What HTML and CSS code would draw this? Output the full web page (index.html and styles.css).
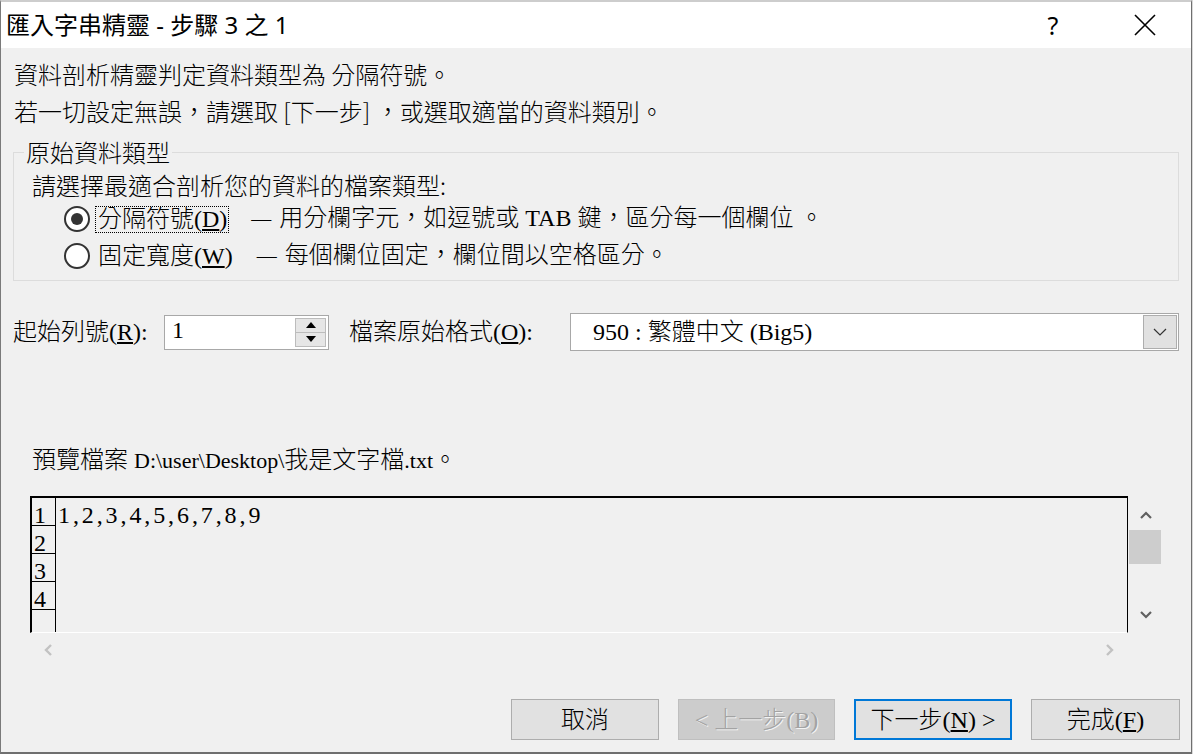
FILE: index.html
```html
<!DOCTYPE html>
<html lang="zh-Hant">
<head>
<meta charset="utf-8">
<title>匯入字串精靈</title>
<link rel="stylesheet" href="styles.css">
</head>
<body>
<div class="win">
  <div class="titlebar">
    <div class="title">匯入字串精靈 - 步驟 3 之 1</div>
    <div class="tb-btn help">?</div>
    <div class="tb-btn close">
      <svg width="22" height="22" viewBox="0 0 22 22"><path d="M1 1 L21 21 M21 1 L1 21" stroke="#000" stroke-width="1.6" fill="none"/></svg>
    </div>
  </div>
  <div class="content">
    <div class="intro">
      <div class="line">資料剖析精靈判定資料類型為 分隔符號。</div>
      <div class="line">若一切設定無誤，請選取 [下一步] ，或選取適當的資料類別。</div>
    </div>
    <fieldset class="group">
      <legend>原始資料類型</legend>
      <div class="prompt">請選擇最適合剖析您的資料的檔案類型:</div>
      <div class="radio-row">
        <span class="radio on"></span>
        <span class="rlabel focus">分隔符號(<u>D</u>)</span>
        <span class="desc"><span class="dash">—</span>用分欄字元，如逗號或 TAB 鍵，區分每一個欄位 。</span>
      </div>
      <div class="radio-row second">
        <span class="radio"></span>
        <span class="rlabel">固定寬度(<u>W</u>)</span>
        <span class="desc"><span class="dash">—</span>每個欄位固定，欄位間以空格區分。</span>
      </div>
    </fieldset>
    <div class="opts">
      <span class="olabel first">起始列號(<u>R</u>):</span>
      <div class="spin-input">
        <span class="val">1</span>
        <div class="spinner">
          <div class="sbtn"><svg width="10" height="6" viewBox="0 0 10 6"><path d="M0 6 L5 0 L10 6 Z" fill="#000"/></svg></div>
          <div class="sbtn"><svg width="10" height="6" viewBox="0 0 10 6"><path d="M0 0 L5 6 L10 0 Z" fill="#000"/></svg></div>
        </div>
      </div>
      <span class="olabel second">檔案原始格式(<u>O</u>):</span>
      <div class="select">
        <span class="sval">950 : 繁體中文 (Big5)</span>
        <div class="dd"><svg width="14" height="8" viewBox="0 0 14 8"><path d="M1 1 L7 7 L13 1" stroke="#333" stroke-width="1.2" fill="none"/></svg></div>
      </div>
    </div>
    <div class="plabel">預覽檔案 <span class="lat">D:\user\Desktop\</span>我是文字檔<span class="lat">.txt</span>。</div>
    <div class="preview-wrap">
      <div class="preview">
        <div class="lnums">
          <div class="ln">1</div>
          <div class="ln">2</div>
          <div class="ln">3</div>
          <div class="ln">4</div>
          <div class="ln"></div>
        </div>
        <div class="data">
          <div class="dl">1,2,3,4,5,6,7,8,9</div>
        </div>
      </div>
      <div class="vscroll">
        <div class="vs-up"><svg width="12" height="8" viewBox="0 0 12 8"><path d="M1 7 L6 2 L11 7" stroke="#606060" stroke-width="2.2" fill="none"/></svg></div>
        <div class="thumb"></div>
        <div class="vs-gap"></div>
        <div class="vs-down"><svg width="12" height="8" viewBox="0 0 12 8"><path d="M1 1 L6 6 L11 1" stroke="#606060" stroke-width="2.2" fill="none"/></svg></div>
      </div>
    </div>
    <div class="hscroll">
      <svg width="9" height="12" viewBox="0 0 9 12"><path d="M8 1 L3 6 L8 11" stroke="#c2c2c2" stroke-width="2.4" fill="none"/></svg>
      <svg width="9" height="12" viewBox="0 0 9 12"><path d="M1 1 L6 6 L1 11" stroke="#c2c2c2" stroke-width="2.4" fill="none"/></svg>
    </div>
    <div class="buttons">
      <div class="btn w148">取消</div>
      <div class="btn w157 disabled">&lt; 上一步(B)</div>
      <div class="btn w158 default">下一步(<u>N</u>) &gt;</div>
      <div class="btn w149">完成(<u>F</u>)</div>
    </div>
  </div>
</div>
</body>
</html>
```

FILE: styles.css
```css
* { box-sizing: border-box; }
html, body { margin: 0; padding: 0; }
body {
  width: 1193px;
  height: 754px;
  overflow: hidden;
  background: #d9d9d9;
  font-family: "Noto Sans", "Noto Sans CJK TC", sans-serif;
  color: #000;
}
.win {
  width: 1192px;
  height: 754px;
  border-top: 2px solid #cdcdcd;
  border-left: 1px solid #7a7a7a;
  border-right: 1px solid #6f6f6f;
  border-bottom: 2px solid #6f6f6f;
  background: #f0f0f0;
  display: flex;
  flex-direction: column;
}
.titlebar {
  height: 46px;
  background: #fff;
  display: flex;
  align-items: center;
}
.title {
  flex: 1;
  padding-left: 5px;
  font-size: 24px;
  line-height: 46px;
  white-space: nowrap;
}
.tb-btn {
  width: 92px;
  height: 46px;
  display: flex;
  align-items: center;
  justify-content: center;
}
.help { font-size: 25px; line-height: 46px; }
.content {
  flex: 1;
  display: flex;
  flex-direction: column;
  padding-top: 7px;
}
.intro {
  padding-left: 13px;
  font-family: "Noto Sans CJK TC", sans-serif;
  font-weight: 300;
  font-size: 24px;
  line-height: 37px;
}
.line { white-space: nowrap; }

.group {
  margin: 9px 12px 0 12px;
  padding: 2px 0 7px 10px;
  border: 1px solid #dcdcdc;
  min-width: 0;
}
.group legend {
  padding: 0 2px;
  font-family: "Noto Sans CJK TC", sans-serif;
  font-weight: 300;
  font-size: 24px;
  line-height: 28px;
}
.prompt {
  margin-left: 8px;
  font-family: "Noto Sans CJK TC", sans-serif;
  font-weight: 300;
  font-size: 24px;
  line-height: 34px;
  white-space: nowrap;
}
.radio-row {
  margin-left: 40px;
  height: 34px;
  display: flex;
  align-items: center;
  white-space: nowrap;
}
.radio-row.second { margin-top: 3px; }
.radio {
  width: 26px;
  height: 26px;
  border: 2px solid #333;
  border-radius: 50%;
  background: #fff;
  display: flex;
  align-items: center;
  justify-content: center;
  flex: none;
}
.radio.on::after {
  content: "";
  width: 12px;
  height: 12px;
  border-radius: 50%;
  background: #333;
}
.rlabel {
  margin-left: 5px;
  height: 27px;
  padding: 0 1px 0 2px;
  border: 1px dotted transparent;
  font-family: "Liberation Serif", "Noto Sans CJK TC", serif;
  font-weight: 300;
  font-size: 24px;
  line-height: 25px;
}
.rlabel.focus { border-color: #000; }
.desc {
  margin-left: 22px;
  font-family: "Liberation Serif", "Noto Sans CJK TC", serif;
  font-weight: 300;
  font-size: 24px;
  line-height: 27px;
}
.dash { font-size: 20px; margin-right: 8px; }

.opts {
  margin: 32px 0 0 12px;
  height: 38px;
  display: flex;
  align-items: center;
  font-family: "Liberation Serif", "Noto Sans CJK TC", serif;
  font-weight: 300;
  font-size: 24px;
  white-space: nowrap;
}
.olabel { line-height: 38px; }
.olabel.first { width: 151px; }
.olabel.second { width: 221px; margin-left: 20px; }
.spin-input {
  width: 165px;
  height: 35px;
  border: 1px solid #a8a8a8;
  background: #fff;
  display: flex;
  align-items: center;
  padding: 2px 2px 2px 7px;
}
.val { flex: 1; line-height: 28px; margin-top: -5px; }
.spinner {
  width: 31px;
  height: 29px;
  display: flex;
  flex-direction: column;
}
.sbtn {
  flex: 1;
  background: #e6e6e6;
  border: 1px solid #bcbcbc;
  display: flex;
  align-items: center;
  justify-content: center;
}
.sbtn + .sbtn { border-top: none; }
.select {
  width: 609px;
  height: 38px;
  border: 1px solid #a8a8a8;
  background: #fff;
  display: flex;
  align-items: center;
  padding-left: 22px;
}
.sval { flex: 1; line-height: 34px; }
.dd {
  width: 34px;
  height: 34px;
  margin-right: 1px;
  background: #e1e1e1;
  border: 1px solid #adadad;
  display: flex;
  align-items: center;
  justify-content: center;
}

.plabel {
  margin: 92px 0 0 31px;
  font-family: "Liberation Serif", "Noto Sans CJK TC", serif;
  font-weight: 300;
  font-size: 24px;
  line-height: 34px;
  white-space: nowrap;
}
.plabel .lat { font-size: 22px; }
.preview-wrap {
  margin: 18px 0 0 29px;
  width: 1132px;
  height: 137px;
  display: flex;
}
.preview {
  width: 1098px;
  height: 137px;
  border-top: 2px solid #000;
  border-left: 2px solid #000;
  border-right: 1px solid #000;
  border-bottom: 1px solid #fff;
  display: flex;
  overflow: hidden;
  font-family: "Liberation Serif", serif;
  font-size: 24px;
}
.lnums {
  width: 24px;
  border-right: 1px solid #000;
  flex: none;
}
.ln {
  height: 28px;
  border-bottom: 1px solid #000;
  line-height: 35px;
  padding-left: 2px;
  overflow: visible;
}
.data { flex: 1; padding-left: 2px; }
.dl { height: 27px; line-height: 35px; letter-spacing: 2.9px; }

.vscroll {
  width: 34px;
  display: flex;
  flex-direction: column;
}
.vs-up {
  height: 34px;
  display: flex;
  justify-content: center;
  padding: 15px 0 0 2px;
}
.thumb {
  height: 34px;
  margin-left: 1px;
  width: 32px;
  background: #cdcdcd;
}
.vs-gap { height: 47px; }
.vs-down {
  display: flex;
  justify-content: center;
  padding-left: 2px;
}

.hscroll {
  margin-left: 29px;
  width: 1098px;
  height: 33px;
  display: flex;
  align-items: center;
  justify-content: space-between;
  padding: 1px 13px 0 13px;
}

.buttons {
  margin-top: 33px;
  height: 41px;
  display: flex;
  justify-content: flex-end;
  gap: 19px;
  padding-right: 11px;
}
.btn {
  height: 41px;
  background: #e1e1e1;
  border: 1px solid #adadad;
  display: flex;
  align-items: center;
  justify-content: center;
  font-family: "Liberation Serif", "Noto Sans CJK TC", serif;
  font-weight: 300;
  font-size: 24px;
  line-height: 30px;
  white-space: nowrap;
}
.w148 { width: 148px; }
.w157 { width: 157px; }
.w158 { width: 158px; }
.w149 { width: 149px; }
.btn.default { border: 2px solid #0078d7; }
.btn.disabled {
  background: #cccccc;
  border-color: #bfbfbf;
  color: #a3a3a3;
  text-shadow: 1px 1px 0 #f4f4f4;
}
```
